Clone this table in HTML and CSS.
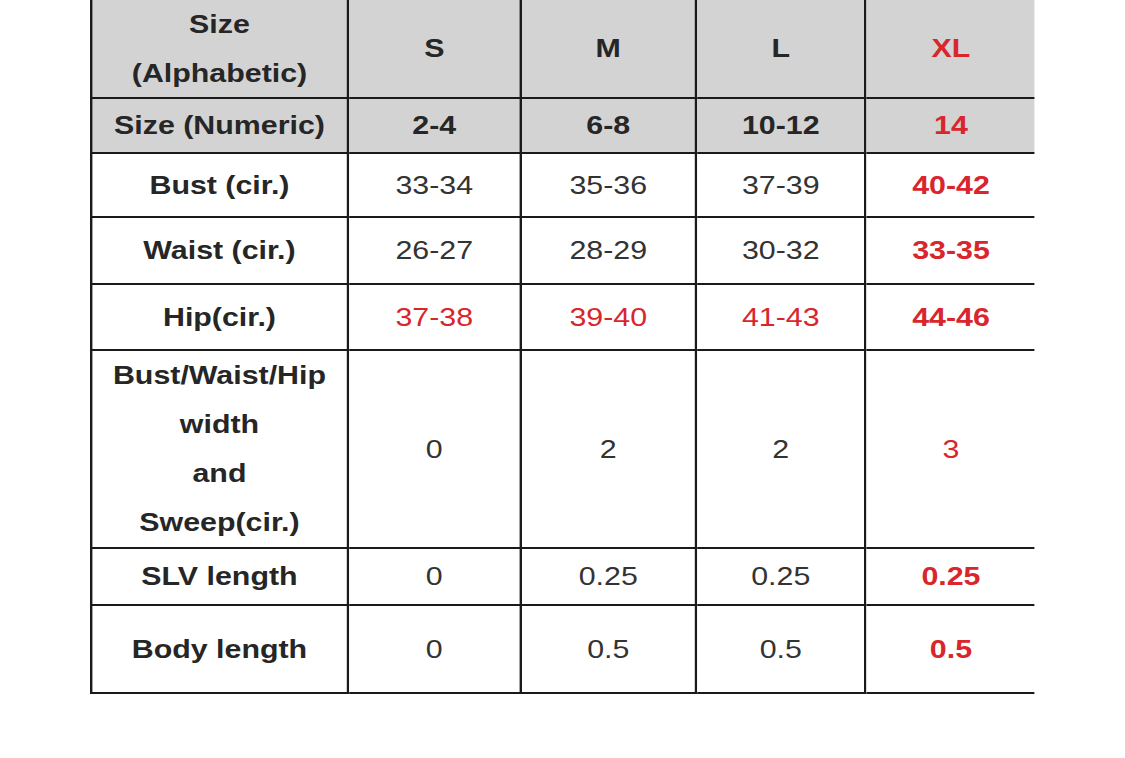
FILE: index.html
```html
<!DOCTYPE html>
<html lang="en">
<head>
<meta charset="utf-8">
<title>Size chart</title>
<link rel="stylesheet" href="styles.css">
</head>
<body>
<div class="chart">
  <div class="grid">
    <div class="cell head first">Size<br>(Alphabetic)</div>
    <div class="cell head bold">S</div>
    <div class="cell head bold">M</div>
    <div class="cell head bold">L</div>
    <div class="cell head bold red last">XL</div>

    <div class="cell head first">Size (Numeric)</div>
    <div class="cell head bold">2-4</div>
    <div class="cell head bold">6-8</div>
    <div class="cell head bold">10-12</div>
    <div class="cell head bold red last">14</div>

    <div class="cell first">Bust (cir.)</div>
    <div class="cell">33-34</div>
    <div class="cell">35-36</div>
    <div class="cell">37-39</div>
    <div class="cell bold red last">40-42</div>

    <div class="cell first">Waist (cir.)</div>
    <div class="cell">26-27</div>
    <div class="cell">28-29</div>
    <div class="cell">30-32</div>
    <div class="cell bold red last">33-35</div>

    <div class="cell first">Hip(cir.)</div>
    <div class="cell red">37-38</div>
    <div class="cell red">39-40</div>
    <div class="cell red">41-43</div>
    <div class="cell bold red last">44-46</div>

    <div class="cell first">Bust/Waist/Hip<br>width<br>and<br>Sweep(cir.)</div>
    <div class="cell">0</div>
    <div class="cell">2</div>
    <div class="cell">2</div>
    <div class="cell red last">3</div>

    <div class="cell first">SLV length</div>
    <div class="cell">0</div>
    <div class="cell">0.25</div>
    <div class="cell">0.25</div>
    <div class="cell bold red last">0.25</div>

    <div class="cell first">Body length</div>
    <div class="cell">0</div>
    <div class="cell">0.5</div>
    <div class="cell">0.5</div>
    <div class="cell bold red last">0.5</div>
  </div>
</div>
</body>
</html>
```

FILE: styles.css
```css
html, body {
  margin: 0;
  padding: 0;
  background: #ffffff;
}

body {
  width: 1125px;
  height: 758px;
  overflow: hidden;
  font-family: "Liberation Sans", Arial, sans-serif;
}

.chart {
  margin-left: 90px;
  width: 788px;
  transform: scaleX(1.2);
  transform-origin: 0 0;
}

.grid {
  display: grid;
  grid-template-columns: 215.8px 144.2px 145.8px 141.7px 140px;
  grid-template-rows: 99px 55px 64px 67px 66px 198px 57px 88px;
}

.cell {
  box-sizing: border-box;
  display: flex;
  align-items: center;
  justify-content: center;
  text-align: center;
  font-size: 25.3px;
  line-height: 49px;
  color: #333333;
  border-right: 2px solid #1a1a1a;
  border-bottom: 2px solid #1a1a1a;
  background: #ffffff;
}

.cell.first {
  border-left: 2px solid #1a1a1a;
  font-weight: bold;
  color: #262626;
}

.cell.last {
  border-right: none;
}

.cell.head {
  background: #d3d3d3;
}

.cell.bold {
  font-weight: bold;
  color: #262626;
}

.cell.red {
  color: #d8262c;
}
```
